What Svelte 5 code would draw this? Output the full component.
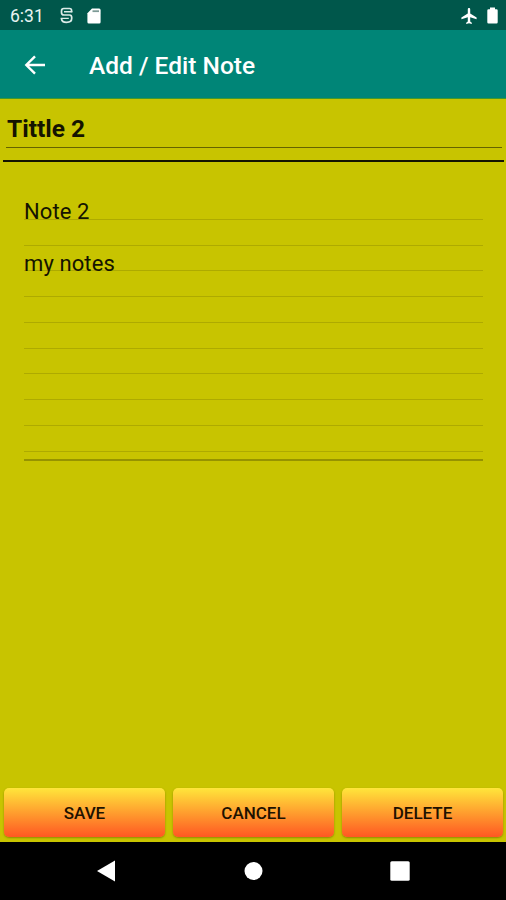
<script lang="ts">
  type Action = { id: string; label: string };

  let title = $state('Tittle 2');
  let lines = $state(['Note 2', '', 'my notes', '', '', '', '', '', '', '']);

  const actions: Action[] = [
    { id: 'save', label: 'SAVE' },
    { id: 'cancel', label: 'CANCEL' },
    { id: 'delete', label: 'DELETE' }
  ];
</script>

<div class="screen">
  <div class="status-bar">
    <span class="clock">6:31</span>
    <svg class="debug" width="13" height="17" viewBox="0 0 13 17" fill="none" stroke="#dcebe8" stroke-width="1.700">
      <path d="M11.600 5.200V3.800Q11.600 1.500 9.500 1.500H3.800Q1.500 1.500 1.500 4V5.500Q1.500 8 4 8H9.500Q11.700 8 11.700 10.500V11.500Q11.700 15.300 6.500 15.300Q1.700 15.300 1.500 11.600" />
      <path d="M4 4.700H12.300M.6 11.400H8.800" stroke-width="1.400" />
    </svg>
    <svg class="sd" width="14" height="16" viewBox="0 0 14 16">
      <path d="M5 .5H12.2Q13.6 .5 13.6 2V14Q13.6 15.5 12.2 15.5H1.8Q.4 15.5 .4 14V5.2Z" fill="#fff" />
      <path d="M5.500 3.200H12" stroke="#7d9a96" stroke-width="1.800" />
    </svg>
    <svg class="plane" width="16" height="16" viewBox="2 2 19 20">
      <path
        fill="#fff"
        d="M21 16v-2l-8-5V3.5C13 2.7 12.3 2 11.5 2S10 2.7 10 3.5V9l-8 5v2l8-2.5V19l-2 1.500V22l3.500-1 3.500 1v-1.500L13 19v-5.500l8 2.500z"
      />
    </svg>
    <svg class="battery" width="11" height="17" viewBox="0 0 11 17">
      <path d="M3 .5H8V2.300H9.500Q10.700 2.300 10.700 3.500V15.300Q10.700 16.500 9.500 16.500H1.500Q.3 16.500 .3 15.300V3.500Q.3 2.300 1.500 2.300H3Z" fill="#fff" />
    </svg>
  </div>

  <header class="app-bar">
    <svg width="22" height="20" viewBox="0 0 22 20" fill="none" stroke="#fff" stroke-width="2.400">
      <path d="M21 10H2.500M11 1.300L2.300 10L11 18.700" />
    </svg>
    <h1>Add / Edit Note</h1>
  </header>

  <main>
    <div class="title-field">{title}</div>
    <div class="divider"></div>
    <div class="note">
      {#each lines as line}
        <div class="line"><span>{line}</span></div>
      {/each}
    </div>
  </main>

  <div class="actions">
    {#each actions as action (action.id)}
      <button type="button">{action.label}</button>
    {/each}
  </div>

  <nav>
    <svg width="18" height="22" viewBox="0 0 18 22"><path d="M0 11L18 .5V21.500Z" fill="#fff" /></svg>
    <svg width="20" height="18" viewBox="0 0 20 18"><circle cx="10.500" cy="9" r="9" fill="#fff" /></svg>
    <svg width="20" height="20" viewBox="0 0 20 20"><rect x=".3" y=".3" width="19.400" height="19.400" rx="1.500" fill="#fff" /></svg>
  </nav>
</div>

<style>
  :global(body) {
    margin: 0;
  }

  .screen {
    display: flex;
    flex-direction: column;
    width: 506px;
    height: 900px;
    overflow: hidden;
    background: #c8c400;
    color: #151400;
    font-family: Roboto, 'Liberation Sans', sans-serif;
  }

  .status-bar {
    display: flex;
    align-items: center;
    box-sizing: border-box;
    height: 30px;
    padding: 1px 8px 0 10px;
    background: #00574b;
    color: #e8f3f1;
  }

  .clock {
    width: 50px;
    font-size: 17.500px;
    line-height: 20px;
  }

  .sd {
    margin-left: 14px;
  }

  .plane {
    margin-left: auto;
  }

  .battery {
    margin-left: 10px;
  }

  .app-bar {
    display: flex;
    align-items: center;
    box-sizing: border-box;
    height: 69px;
    padding-left: 24px;
    background: #008577;
    border-bottom: 1px solid #3f982f;
    color: #fff;
  }

  .app-bar svg {
    margin-top: 1px;
  }

  .app-bar h1 {
    margin: 3px 0 0 43px;
    font-size: 24.500px;
    font-weight: 500;
    line-height: 30px;
  }

  main {
    flex: 1;
  }

  .title-field {
    box-sizing: border-box;
    height: 49px;
    margin: 0 4px 0 6px;
    padding: 15px 0 0 1px;
    border-bottom: 1px solid #656300;
    font-size: 24.500px;
    font-weight: 700;
    line-height: 30px;
  }

  .divider {
    height: 2px;
    margin: 12px 2px 0 3px;
    background: #141400;
  }

  .note {
    margin: 32px 23px 0 24px;
    padding-bottom: 7px;
    border-bottom: 2px solid #969300;
  }

  .line {
    box-sizing: border-box;
    height: 25.750px;
    border-bottom: 1px solid #aeaa00;
    font-size: 22px;
    letter-spacing: 0.1px;
    line-height: 35px;
    white-space: nowrap;
  }

  .actions {
    display: flex;
    gap: 8px;
    padding: 0 3px 5px 4px;
  }

  .actions button {
    flex: 1;
    height: 49px;
    padding: 0;
    border: 0;
    border-radius: 5px;
    background: linear-gradient(#ffe63b, #ff5722);
    box-shadow: 0 1px 2px rgba(90, 80, 0, 0.5);
    color: #1e1200;
    font: 500 17px Roboto, 'Liberation Sans', sans-serif;
  }

  nav {
    display: flex;
    align-items: center;
    justify-content: space-between;
    box-sizing: border-box;
    height: 58px;
    padding: 0 96px 0 97px;
    background: #000;
  }
</style>
